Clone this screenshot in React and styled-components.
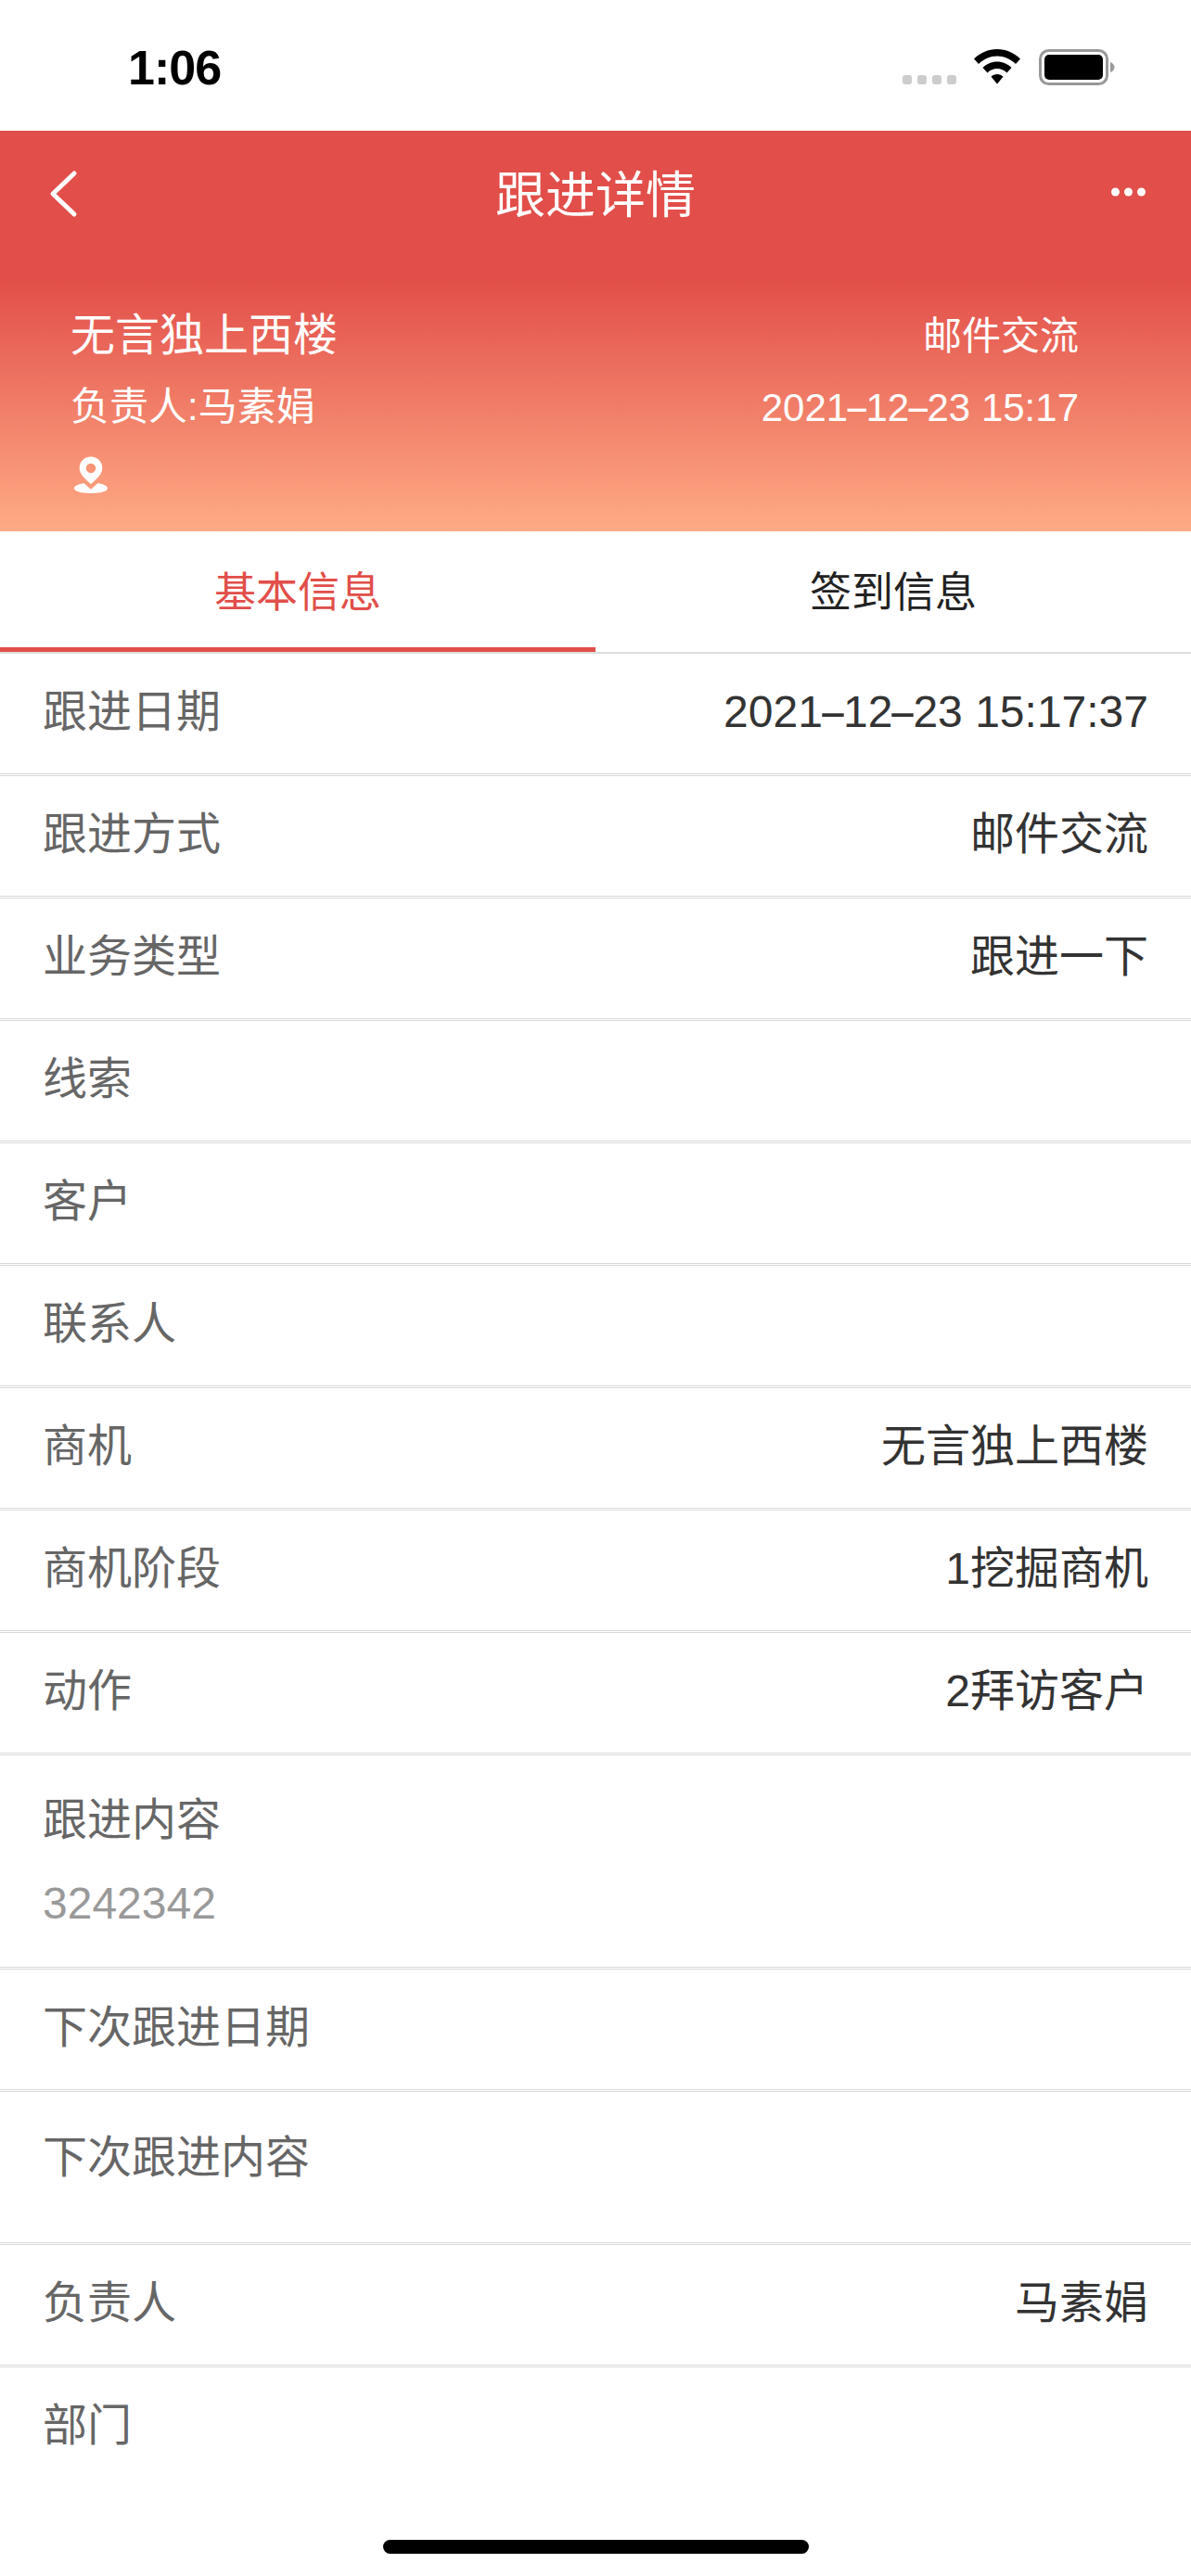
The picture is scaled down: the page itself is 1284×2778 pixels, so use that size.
import styled, { createGlobalStyle } from "styled-components";

const GlobalStyle = createGlobalStyle`
  html, body {
    margin: 0;
    padding: 0;
    background: #fff;
  }
  body {
    font-family: "Liberation Sans", "Noto Sans CJK SC", sans-serif;
  }
  * {
    box-sizing: border-box;
  }
`;

const Page = styled.div`
  position: relative;
  width: 1284px;
  height: 2778px;
  overflow: hidden;
  background: #fff;
`;

const StatusBar = styled.div`
  height: 141px;
  display: flex;
  justify-content: space-between;
  padding: 45px 82px 0 138px;
`;

const Clock = styled.div`
  font-size: 52px;
  line-height: 56px;
  font-weight: 700;
  letter-spacing: -1px;
  color: #000;
`;

const StatusIcons = styled.div`
  display: flex;
  align-items: flex-start;
  padding-top: 8px;
`;

const SignalDots = styled.div`
  display: flex;
  gap: 6px;
  margin: 28px 19px 0 0;
`;

const SignalDot = styled.span`
  width: 10px;
  height: 10px;
  border-radius: 3px;
  background: #ccc;
`;

const WifiIcon = styled.svg`
  width: 50px;
  height: 38px;
  margin-right: 20px;
`;

const BatteryIcon = styled.svg`
  width: 82px;
  height: 40px;
`;

const Header = styled.header`
  height: 432px;
  background: linear-gradient(to bottom, #e24e49 0, #e24e49 160px, #ffab85 100%);
  color: #fff;
`;

const NavBar = styled.div`
  height: 134px;
  display: flex;
  align-items: center;
  justify-content: space-between;
  padding: 0 49px 0 52px;
`;

const NavTitle = styled.div`
  font-size: 54px;
  line-height: 64px;
  padding-top: 6px;
`;

const BackIcon = styled.svg`
  width: 34px;
  height: 52px;
  margin-top: 1px;
`;

const MoreIcon = styled.svg`
  width: 37px;
  height: 10px;
  margin-top: -3px;
`;

const InfoGrid = styled.div`
  display: flex;
  justify-content: space-between;
  padding: 52px 121px 0 76px;
`;

const InfoColumn = styled.div`
  display: flex;
  flex-direction: column;
  align-items: ${props => (props.$right ? "flex-end" : "flex-start")};
`;

const Name = styled.div`
  font-size: 48px;
  line-height: 70px;
`;

const Meta = styled.div`
  font-size: 42px;
  line-height: 70px;
  margin-top: ${props => (props.$gap ? props.$gap : 7)}px;
`;

const PinIcon = styled.svg`
  width: 36px;
  height: 41px;
  margin: 18px 0 0 4px;
`;

const Tabs = styled.div`
  display: flex;
  height: 132px;
  border-bottom: 2px solid #ddd;
`;

const Tab = styled.div`
  flex: 1;
  height: 130px;
  display: flex;
  align-items: center;
  justify-content: center;
  font-size: 45px;
  color: ${props => (props.$active ? "#e24e49" : "#222")};
  border-bottom: 5px solid ${props => (props.$active ? "#e24e49" : "transparent")};
`;

const Row = styled.div`
  height: ${props => (props.$height ? props.$height : 132)}px;
  padding: ${props => (props.$top ? `${props.$top}px` : "0")} 46px ${props => (props.$top ? "0" : "3px")};
  display: flex;
  justify-content: space-between;
  align-items: ${props => (props.$top ? "flex-start" : "center")};
  border-bottom: 3px double ${props => (props.$last ? "transparent" : "#d9d9d9")};
  font-size: 48px;
`;

const StackedRow = styled.div`
  height: 231px;
  padding: 42px 46px 0;
  border-bottom: 3px double #d9d9d9;
  font-size: 48px;
`;

const Label = styled.div`
  color: #666;
  line-height: 56px;
`;

const Value = styled.div`
  color: #333;
  line-height: 56px;
`;

const Note = styled.div`
  color: #999;
  line-height: 56px;
  margin-top: 34px;
`;

// the reference font has a longer hyphen than Liberation Sans
const Dash = styled.span`
  display: inline-block;
  width: 0.46em;
  text-align: center;
  transform: scaleX(2);
`;

const HomeBar = styled.div`
  position: absolute;
  left: 413px;
  bottom: 24px;
  width: 459px;
  height: 15px;
  border-radius: 8px;
  background: #000;
`;

const DateText = ({ value }) => {
  const parts = value.split("-");
  return (
    <>
      {parts[0]}<Dash>-</Dash>{parts[1]}<Dash>-</Dash>{parts[2]}
    </>
  );
};

const rows = [
  ["跟进日期", <DateText value="2021-12-23 15:17:37" />],
  ["跟进方式", "邮件交流"],
  ["业务类型", "跟进一下"],
  ["线索", ""],
  ["客户", ""],
  ["联系人", ""],
  ["商机", "无言独上西楼"],
  ["商机阶段", "1挖掘商机"],
  ["动作", "2拜访客户"],
];

const App = () => {
  return (
    <Page>
      <GlobalStyle />
      <StatusBar>
        <Clock>1:06</Clock>
        <StatusIcons>
          <SignalDots>
            <SignalDot />
            <SignalDot />
            <SignalDot />
            <SignalDot />
          </SignalDots>
          <WifiIcon viewBox="0 0 50 38">
            <path d="M25 0C15.500 0 7 3.800 0 10.500L5 16C10.500 10.700 17.500 7.500 25 7.500S39.500 10.700 45 16L50 10.500C43 3.800 34.500 0 25 0Z" fill="#000" />
            <path d="M25 13.500C19 13.500 13.500 16 9.500 20L14.500 25.500C17.300 22.700 21 21 25 21S32.700 22.700 35.500 25.500L40.500 20C36.500 16 31 13.500 25 13.500Z" fill="#000" />
            <path d="M25 27C22.500 27 20.200 28 18.500 29.700L25 37.500L31.500 29.700C29.800 28 27.500 27 25 27Z" fill="#000" />
          </WifiIcon>
          <BatteryIcon viewBox="0 0 82 40">
            <rect x="1.500" y="1.500" width="72" height="36" rx="9" fill="none" stroke="#999" strokeWidth="3" />
            <rect x="6" y="6" width="63" height="27" rx="5" fill="#000" />
            <path d="M77 14C80 15 81.500 17.500 81.500 19.500S80 24 77 25Z" fill="#999" />
          </BatteryIcon>
        </StatusIcons>
      </StatusBar>

      <Header>
        <NavBar>
          <BackIcon viewBox="0 0 34 52">
            <path d="M28 4L5 26L28 48" fill="none" stroke="#fff" strokeWidth="5" strokeLinecap="round" strokeLinejoin="round" />
          </BackIcon>
          <NavTitle>跟进详情</NavTitle>
          <MoreIcon viewBox="0 0 37 10">
            <circle cx="4.500" cy="5" r="4.500" fill="#fff" />
            <circle cx="18.500" cy="5" r="4.500" fill="#fff" />
            <circle cx="32.500" cy="5" r="4.500" fill="#fff" />
          </MoreIcon>
        </NavBar>
        <InfoGrid>
          <InfoColumn>
            <Name>无言独上西楼</Name>
            <Meta>负责人:马素娟</Meta>
            <PinIcon viewBox="0 0 38 42">
              <path fillRule="evenodd" d="M19 0C11.800 0 6 5.600 6 12.800C6 20.500 13.500 26 19 31C24.500 26 32 20.500 32 12.800C32 5.600 26.200 0 19 0ZM19 7.500A5.500 5.500 0 1 1 19 18.500A5.500 5.500 0 1 1 19 7.500Z" fill="#fff" />
              <path d="M11 30C5 31 0 33 0 36C0 39.500 8.500 41.500 19 41.500S38 39.500 38 36C38 33 33 31 27 30L19 37Z" fill="#fff" />
            </PinIcon>
          </InfoColumn>
          <InfoColumn $right>
            <Meta $gap={1}>邮件交流</Meta>
            <Meta><DateText value="2021-12-23 15:17" /></Meta>
          </InfoColumn>
        </InfoGrid>
      </Header>

      <Tabs>
        <Tab $active>基本信息</Tab>
        <Tab>签到信息</Tab>
      </Tabs>

      {rows.map(([label, value]) => (
        <Row key={label}>
          <Label>{label}</Label>
          {value && <Value>{value}</Value>}
        </Row>
      ))}

      <StackedRow>
        <Label>跟进内容</Label>
        <Note>3242342</Note>
      </StackedRow>

      <Row>
        <Label>下次跟进日期</Label>
      </Row>
      <Row $height={165} $top={43}>
        <Label>下次跟进内容</Label>
      </Row>
      <Row>
        <Label>负责人</Label>
        <Value>马素娟</Value>
      </Row>
      <Row $last>
        <Label>部门</Label>
      </Row>

      <HomeBar />
    </Page>
  );
};

export default App;
